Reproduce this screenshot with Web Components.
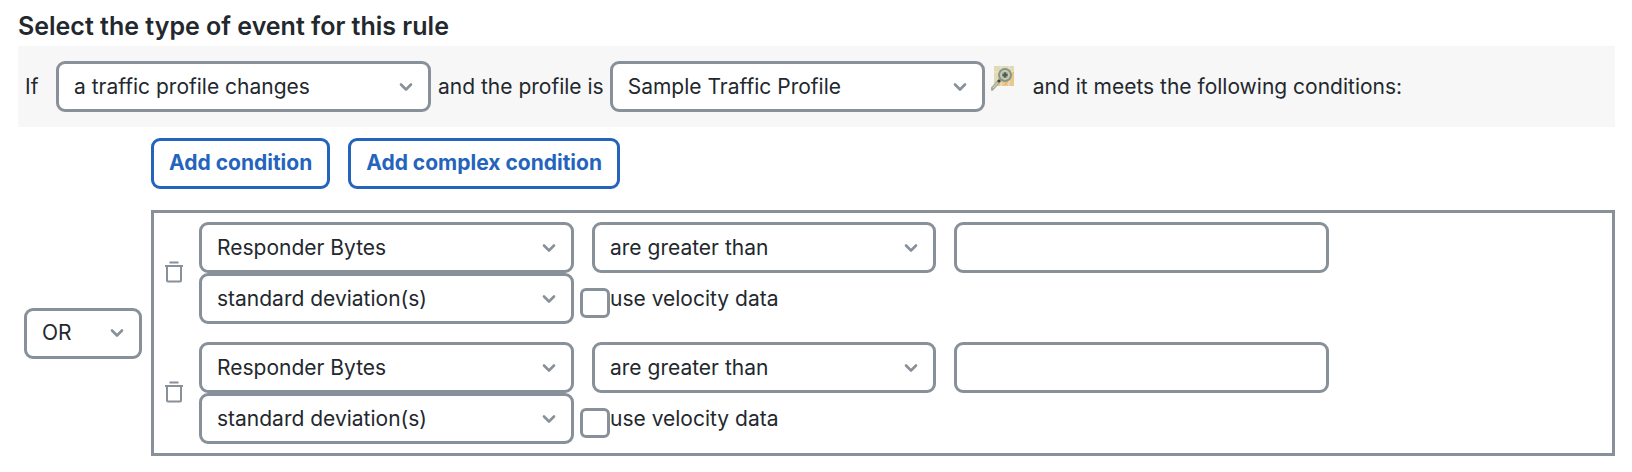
<!DOCTYPE html>
<html lang="en">
<head>
<meta charset="utf-8">
<meta name="viewport" content="width=device-width, initial-scale=1">
<title>Rule event type</title>
<style>
  :root {
    --ink: #23282e;
    --line: #889099;
    --accent: #2464bd;
    --band: #f7f7f7;
  }
  body {
    margin: 0;
    background: #fff;
    color: var(--ink);
    font: 400 21px/28px Inter, "Liberation Sans", sans-serif;
  }
</style>
</head>
<body>
<rule-editor></rule-editor>

<template id="rule-select">
  <style>
    :host { display: grid; flex: 0 1 375px; min-width: 0; box-sizing: border-box; }
    :host([size="medium"]) { flex-basis: 344px; }
    :host([size="small"]) { flex: 0 0 118px; }
    select, svg { grid-area: 1 / 1; }
    select {
      appearance: none; box-sizing: border-box; width: 100%; height: 51px; margin: 0;
      padding: 0 40px 0 15px; border: 3px solid var(--line); border-radius: 9px;
      background: #fff; color: inherit; font: inherit;
    }
    svg { justify-self: end; align-self: center; margin-right: 18px; pointer-events: none; }
  </style>
  <select></select>
  <svg width="14" height="10" viewBox="0 0 14 10" fill="none" stroke="#889099" stroke-width="2.6" stroke-linecap="round" stroke-linejoin="round"><path d="M2 2.5 7 7.5 12 2.5"/></svg>
</template>

<template id="rule-button">
  <style>
    :host { display: block; }
    button {
      box-sizing: border-box; height: 51px; margin: 0; padding: 0 15px 2px;
      border: 3px solid var(--accent); border-radius: 9px; background: #fff;
      color: var(--accent); font: inherit; font-weight: 700; cursor: pointer;
    }
  </style>
  <button type="button"><slot></slot></button>
</template>

<template id="rule-check">
  <style>
    :host { display: block; }
    label { display: flex; align-items: center; }
    input {
      appearance: none; box-sizing: border-box; flex: none; width: 30px; height: 30px;
      margin: 8px 0 0; border: 3px solid var(--line); border-radius: 6px; background: #fff;
    }
    input:checked { background: var(--line); }
  </style>
  <label><input type="checkbox"><span><slot></slot></span></label>
</template>

<template id="condition-row">
  <style>
    :host { display: flex; align-items: center; gap: 15px; }
    .delete { flex: none; display: block; margin: 0; padding: 0 0 2px; border: 0; background: none; cursor: pointer; }
    svg { display: block; }
    .fields { flex: 1; min-width: 0; }
    .line { display: flex; align-items: center; gap: 18px; }
    .line + .line { gap: 6px; }
    input {
      box-sizing: border-box; flex: 0 1 375px; min-width: 0; height: 51px; margin: 0; padding: 0 16px;
      border: 3px solid var(--line); border-radius: 9px; background: #fff; color: inherit; font: inherit;
    }
  </style>
  <button class="delete" type="button" aria-label="Delete condition">
    <svg width="20" height="22" viewBox="0 0 20 22" fill="none" stroke="#889099" stroke-width="2"><path d="M5.5 1.5h9M1 5h18M3 5v14.5q0 1 1 1h12q1 0 1-1V5"/></svg>
  </button>
  <div class="fields">
    <div class="line">
      <rule-select label="Field" options="Responder Bytes|Initiator Bytes|Total Bytes"></rule-select>
      <rule-select size="medium" label="Operator" options="are greater than|are less than"></rule-select>
      <input type="text" aria-label="Value">
    </div>
    <div class="line">
      <rule-select label="Unit" options="standard deviation(s)|byte(s)"></rule-select>
      <rule-check>use velocity data</rule-check>
    </div>
  </div>
</template>

<template id="condition-group">
  <style>
    :host { display: flex; align-items: center; gap: 9px; margin-top: 21px; padding-left: 6px; }
    .rows {
      flex: 1; min-width: 0; display: grid; gap: 18px; box-sizing: border-box;
      padding: 9px 10px; border: 3px solid var(--line);
    }
  </style>
  <rule-select size="small" label="Combine conditions with" options="OR|AND"></rule-select>
  <div class="rows"><slot></slot></div>
</template>

<template id="rule-editor">
  <style>
    :host { display: block; padding: 10px 17px 15px 18px; }
    h2 { margin: 0; font-size: 25px; line-height: 32px; font-weight: 600; }
    .event {
      display: flex; align-items: center; margin-top: 4px; padding: 15px 7px;
      background: var(--band); white-space: nowrap;
    }
    .event .if { width: 31px; }
    .event .profile { margin: 0 6px 0 7px; }
    .event .meets { margin-left: 18px; }
    .edit { align-self: flex-start; display: block; margin: 5px 0 0 6px; }
    .edit svg { display: block; }
    .actions { display: flex; gap: 18px; margin-top: 11px; padding-left: 133px; }
  </style>
  <h2>Select the type of event for this rule</h2>
  <div class="event">
    <span class="if">If</span>
    <rule-select label="Event type" options="a traffic profile changes|an intrusion event occurs|a connection event occurs"></rule-select>
    <span class="profile">and the profile is</span>
    <rule-select label="Traffic profile" options="Sample Traffic Profile"></rule-select>
    <a class="edit" href="#profile" aria-label="View traffic profile">
      <svg width="24" height="25" viewBox="0 0 24 25">
        <path d="M3 0h20v20H3z" fill="#dedbb6"/>
        <path d="M3 20 9 13l14-8v15z" fill="#e9c890"/>
        <path d="M3 6h20M10 0v20M18 0v20" stroke="#ebe9c8" stroke-width="1"/>
        <path d="m14 19 4-7 5-6" fill="none" stroke="#d6b078"/>
        <path d="m1 23 9-10" stroke="#aaa998" stroke-width="3.4" stroke-linecap="round"/>
        <path d="m2 22 7-8" stroke="#e0dfcd" stroke-width="1"/>
        <circle cx="8" cy="15" r="1.6" fill="#45473c"/>
        <circle cx="14" cy="9" r="6" fill="#c4ccb4" stroke="#8d9482" stroke-width="2"/>
        <circle cx="14" cy="9" r="3" fill="#8b9888"/>
        <path d="M14 6.5v5M11.5 9h5" stroke="#46544c" stroke-width="1.6"/>
      </svg>
    </a>
    <span class="meets">and it meets the following conditions:</span>
  </div>
  <div class="actions">
    <rule-button>Add condition</rule-button>
    <rule-button>Add complex condition</rule-button>
  </div>
  <condition-group>
    <condition-row></condition-row>
    <condition-row></condition-row>
  </condition-group>
</template>

<script>
  class TemplateElement extends HTMLElement {
    constructor() {
      super();
      const template = document.getElementById(this.localName);
      this.attachShadow({ mode: 'open' }).append(template.content.cloneNode(true));
    }
  }

  class RuleSelect extends TemplateElement {
    connectedCallback() {
      const select = this.shadowRoot.querySelector('select');
      select.setAttribute('aria-label', this.getAttribute('label'));
      select.replaceChildren(...this.getAttribute('options').split('|').map(text => new Option(text)));
    }
  }

  customElements.define('rule-select', RuleSelect);
  customElements.define('rule-button', class extends TemplateElement {});
  customElements.define('rule-check', class extends TemplateElement {});
  customElements.define('condition-row', class extends TemplateElement {});
  customElements.define('condition-group', class extends TemplateElement {});
  customElements.define('rule-editor', class extends TemplateElement {});
</script>
</body>
</html>
